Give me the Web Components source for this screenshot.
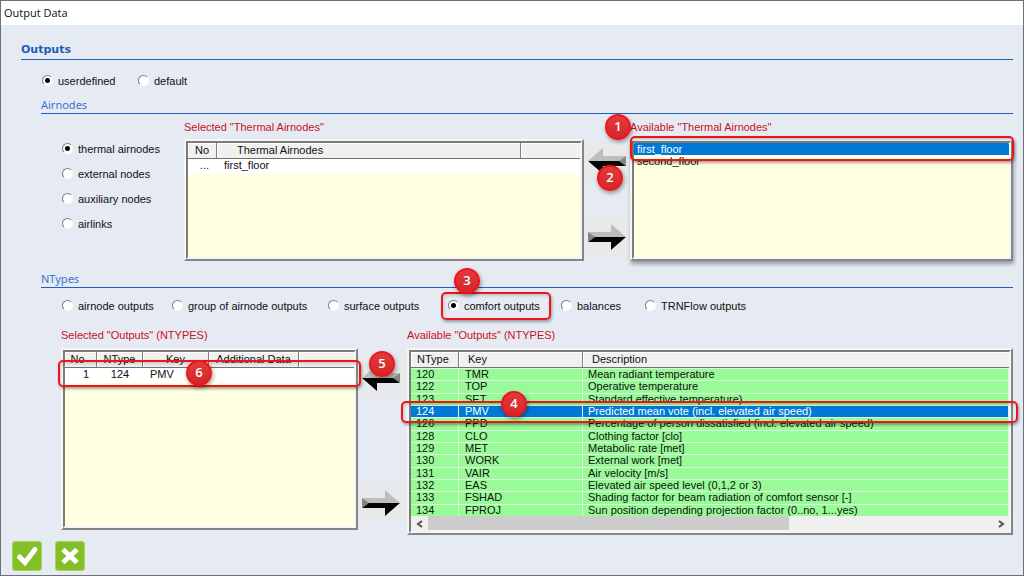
<!DOCTYPE html>
<html lang="en">
<head>
<meta charset="utf-8">
<meta name="viewport" content="width=device-width, initial-scale=1">
<title>Output Data</title>
<style>
  body {
    margin: 0;
    padding: 1px;
    background: #6c7078;
    font: 11px/14px 'Liberation Sans', sans-serif;
    color: #111;
  }

  .section {
    padding-left: 20px;
  }

  .airnodes {
    display: grid;
    grid-template-columns: 143px minmax(0, 400fr) 46px minmax(0, 383fr);
    margin-top: 6px;
    align-items: start;
  }

  .ntypes {
    display: grid;
    grid-template-columns: minmax(0, 297fr) 49px minmax(0, 606fr);
    margin: 15px 0 0 20px;
    align-items: start;
  }

  .airnodes radio-group {
    padding: 21px 0 0 21px;
  }

  .airnodes list-panel {
    --frame-height: 122px;
    --label-gap: 5px;
  }

  .ntypes list-panel {
    --frame-height: 182px;
    --label-gap: 6px;
  }

  .source radio-group {
    padding: 13px 0 9px 21px;
  }

  .ntypes-filter {
    padding: 10px 0 0 21px;
  }

  .airnodes transfer-buttons {
    padding-top: 21px;
    --gap: 36px;
  }

  .ntypes transfer-buttons {
    padding-top: 30px;
    --gap: 85px;
  }
</style>
</head>
<body>
  <output-dialog heading="Output Data">
    <section-heading main>Outputs</section-heading>
    <div class="source">
      <radio-group id="source" label="Source"></radio-group>
    </div>
    <div class="section">
      <section-heading>Airnodes</section-heading>
      <div class="airnodes">
        <radio-group id="nodeKind" label="Airnodes" vertical></radio-group>
        <list-panel label='Selected "Thermal Airnodes"'>
          <data-grid id="selectedNodes"></data-grid>
        </list-panel>
        <transfer-buttons>
          <call-out number="2" style="left: 13px; top: 45px"></call-out>
        </transfer-buttons>
        <list-panel label='Available "Thermal Airnodes"' raised>
          <list-box id="availableNodes" label="Available Thermal Airnodes"></list-box>
          <call-out slot="marks" box style="left: 0; right: -1px; top: -3px; height: 25px"></call-out>
          <call-out slot="marks" number="1" style="left: -25px; top: -25px"></call-out>
        </list-panel>
      </div>
      <section-heading style="margin-top: 10px">NTypes</section-heading>
      <radio-group id="outputKind" class="ntypes-filter" label="NTypes"></radio-group>
      <div class="ntypes">
        <list-panel label='Selected "Outputs" (NTYPES)'>
          <data-grid id="selectedOutputs"></data-grid>
          <call-out slot="marks" box style="left: -3px; right: -3px; top: 12px; height: 27px"></call-out>
          <call-out slot="marks" number="6" style="left: 125px; top: 12px"></call-out>
        </list-panel>
        <transfer-buttons>
          <call-out number="5" style="left: 11px; top: 23px"></call-out>
        </transfer-buttons>
        <list-panel label='Available "Outputs" (NTYPES)'>
          <data-grid id="availableOutputs" dense></data-grid>
          <scroll-strip></scroll-strip>
          <call-out slot="marks" box style="left: -6px; right: -5px; top: 53px; height: 22px"></call-out>
          <call-out slot="marks" number="4" style="left: 94px; top: 43px"></call-out>
        </list-panel>
      </div>
    </div>
    <dialog-actions slot="actions"></dialog-actions>
  </output-dialog>

<script>
class OutputDialog extends HTMLElement {
  constructor() {
    super();
    this.attachShadow({ mode: 'open' });
  }

  connectedCallback() {
    this.shadowRoot.innerHTML = `
      <style>
        :host {
          display: flex;
          flex-direction: column;
          box-sizing: border-box;
          min-height: calc(100vh - 2px);
          background: #e5eaf3;
        }

        header {
          height: 24px;
          box-sizing: border-box;
          padding: 0 3px;
          background: #fff;
          font: 11px/24px 'Open Sans', sans-serif;
        }

        main {
          padding: 16px 10px 0 20px;
        }

        footer {
          padding: 6px 11px 4px;
        }
      </style>
      <header>${this.getAttribute('heading')}</header>
      <main><slot></slot></main>
      <footer><slot name="actions"></slot></footer>
    `;
  }
}

class SectionHeading extends HTMLElement {
  constructor() {
    super();
    this.attachShadow({ mode: 'open' });
  }

  connectedCallback() {
    this.shadowRoot.innerHTML = `
      <style>
        :host {
          display: block;
          border-bottom: 1px solid #1a62b8;
          color: #3a72cc;
        }

        h2 {
          margin: 0;
          font: 11px/16px 'Noto Sans', sans-serif;
        }

        :host([main]) h2 {
          font: bold 11px/18px 'DejaVu Sans', sans-serif;
          color: #1a5fba;
        }
      </style>
      <h2><slot></slot></h2>
    `;
  }
}

class RadioGroup extends HTMLElement {
  constructor() {
    super();
    this.attachShadow({ mode: 'open' });
  }

  set options(options) {
    this._options = options;
    this.render();
  }

  render() {
    const items = this._options.map((option) => `
      <label>
        <input type="radio" name="choice" ${option.checked ? 'checked' : ''}>
        <span>${option.text}</span>
        ${option.number ? `
          <call-out box style="inset: -6px -11px -7px -7px"></call-out>
          <call-out number="${option.number}" style="left: 6px; top: -30px"></call-out>
        ` : ''}
      </label>
    `).join('');

    this.shadowRoot.innerHTML = `
      <style>
        :host {
          display: block;
        }

        .group {
          display: grid;
          grid-template-columns: var(--columns, 96px auto);
          justify-content: start;
        }

        :host([vertical]) .group {
          grid-template-columns: auto;
          row-gap: 10px;
        }

        label {
          position: relative;
          display: flex;
          justify-self: start;
          align-items: center;
          gap: 5px;
          height: 15px;
          white-space: nowrap;
        }

        input {
          appearance: none;
          flex: none;
          width: 11px;
          height: 11px;
          margin: 0;
          border: 1px solid;
          border-color: #7e7e7e #fafafa #fafafa #7e7e7e;
          border-radius: 50%;
          background: #fff;
        }

        input:checked {
          background: radial-gradient(circle, #000 2px, #fff 3px);
        }
      </style>
      <div class="group" role="radiogroup" aria-label="${this.getAttribute('label')}">${items}</div>
    `;
  }
}

class ListPanel extends HTMLElement {
  constructor() {
    super();
    this.attachShadow({ mode: 'open' });
  }

  connectedCallback() {
    this.shadowRoot.innerHTML = `
      <style>
        :host {
          display: block;
        }

        .label {
          height: 14px;
          margin-bottom: var(--label-gap);
          color: #cc1020;
          white-space: nowrap;
        }

        .frame {
          position: relative;
          box-sizing: border-box;
          min-height: var(--frame-height);
          display: flex;
          border: 2px solid;
          border-color: #f6f6f6 #858585 #858585 #f6f6f6;
        }

        :host([raised]) .frame {
          box-shadow: 1px 3px 4px rgba(0, 0, 0, 0.35);
        }

        .content {
          flex: 1;
          min-width: 0;
          display: flex;
          flex-direction: column;
          border: 2px solid;
          border-color: #7c7c7c #f6f6f6 #f6f6f6 #7c7c7c;
          background: #ffffe1;
        }

        .marks {
          position: absolute;
          inset: -2px;
          pointer-events: none;
        }
      </style>
      <div class="label">${this.getAttribute('label')}</div>
      <div class="frame">
        <div class="content"><slot></slot></div>
        <div class="marks"><slot name="marks"></slot></div>
      </div>
    `;
  }
}

class DataGrid extends HTMLElement {
  constructor() {
    super();
    this.attachShadow({ mode: 'open' });
  }

  set data(data) {
    this._data = data;
    this.render();
  }

  render() {
    const { columns, rows, selected } = this._data;
    const cols = columns.map((c) => `<col${c.width ? ` style="width: ${c.width}px"` : ''}>`).join('');
    const head = columns.map((c) => `<th style="${c.head || ''}">${c.title}</th>`).join('');
    const body = rows.map((row) => `
      <tr class="${row[0] === selected ? 'selected' : ''}">
        ${row.map((cell, i) => `<td style="${columns[i].cell || ''}">${cell}</td>`).join('')}
      </tr>
    `).join('');

    this.shadowRoot.innerHTML = `
      <style>
        :host {
          display: block;
        }

        table {
          width: 100%;
          table-layout: fixed;
          border-collapse: separate;
          border-spacing: 0;
        }

        th,
        td {
          padding: 0;
          white-space: nowrap;
        }

        th {
          height: 15px;
          line-height: 15px;
          font-weight: normal;
          background: #f0f0f0;
          border-right: 1px solid #808080;
          border-bottom: 1px solid #707070;
          box-shadow: inset 1px 1px #fff;
        }

        th:last-child {
          border-right: 0;
        }

        td {
          height: 15px;
          line-height: 13px;
          vertical-align: top;
          background: #fff;
        }

        /* dense: green list whose rows share the height above the scroll bar */
        :host([dense]) {
          height: 164px;
        }

        :host([dense]) table {
          height: 164px;
        }

        :host([dense]) td {
          height: auto;
          line-height: 11px;
          background: #98fb98;
          border-right: 1px solid #dff5df;
          border-top: 1px solid #dff5df;
        }

        :host([dense]) .selected td {
          background: #0078d7;
          color: #fff;
        }
      </style>
      <table>
        <colgroup>${cols}</colgroup>
        <thead><tr>${head}</tr></thead>
        <tbody>${body}</tbody>
      </table>
    `;
  }
}

class ListBox extends HTMLElement {
  constructor() {
    super();
    this.attachShadow({ mode: 'open' });
  }

  set items(items) {
    this.shadowRoot.innerHTML = `
      <style>
        :host {
          display: flex;
          flex: 1;
        }

        select {
          flex: 1;
          min-width: 0;
          padding: 0;
          border: 0;
          outline: 0;
          overflow: hidden;
          background: #ffffe1;
          color: inherit;
          font: inherit;
        }

        option {
          height: 12px;
          min-height: 0;
          padding: 0 3px;
          line-height: 12px;
        }

        option:checked {
          background: #0078d7 linear-gradient(#0078d7, #0078d7);
          color: #fff;
        }
      </style>
      <select size="8" aria-label="${this.getAttribute('label')}">
        ${items.map((item, i) => `<option ${i === 0 ? 'selected' : ''}>${item}</option>`).join('')}
      </select>
    `;
  }
}

class TransferButtons extends HTMLElement {
  constructor() {
    super();
    this.attachShadow({ mode: 'open' });
  }

  connectedCallback() {
    this.shadowRoot.innerHTML = `
      <style>
        :host {
          position: relative;
          display: flex;
          flex-direction: column;
          gap: var(--gap);
        }

        button {
          height: 40px;
          padding: 0 3px;
          border: 0;
          background: #e8e9eb;
        }

        svg {
          display: block;
        }
      </style>
      <button type="button" aria-label="Add">
        <svg width="40" height="26" viewBox="0 0 40 26">
          <path d="M1 13 16 0V8H39L33 13Z" fill="#bdbdbd"/>
          <path d="M1 13H33L39 18H16V26Z" fill="#050505"/>
          <path d="M39 8V18L32 13Z" fill="#858585"/>
        </svg>
      </button>
      <button type="button" aria-label="Remove">
        <svg width="40" height="26" viewBox="0 0 40 26">
          <path d="M39 13 24 0V8H1L7 13Z" fill="#bdbdbd"/>
          <path d="M39 13H7L1 18H24V26Z" fill="#050505"/>
          <path d="M1 8V18L8 13Z" fill="#858585"/>
        </svg>
      </button>
      <slot></slot>
    `;
  }
}

class ScrollStrip extends HTMLElement {
  constructor() {
    super();
    this.attachShadow({ mode: 'open' });
  }

  connectedCallback() {
    this.shadowRoot.innerHTML = `
      <style>
        :host {
          display: flex;
          height: 15px;
          background: #f0f0f0;
        }

        button {
          width: 17px;
          padding: 0;
          border: 0;
          background: none;
        }

        svg {
          display: block;
          margin: auto;
          fill: none;
          stroke: #505050;
          stroke-width: 2;
        }

        .track {
          flex: 1;
        }

        .thumb {
          width: 64%;
          height: 14px;
          background: #cdcdcd;
        }
      </style>
      <button type="button" aria-label="Scroll left">
        <svg width="8" height="8" viewBox="0 0 8 8"><path d="M6 1 2 4 6 7"/></svg>
      </button>
      <div class="track"><div class="thumb"></div></div>
      <button type="button" aria-label="Scroll right">
        <svg width="8" height="8" viewBox="0 0 8 8"><path d="M2 1 6 4 2 7"/></svg>
      </button>
    `;
  }
}

class CallOut extends HTMLElement {
  constructor() {
    super();
    this.attachShadow({ mode: 'open' });
  }

  connectedCallback() {
    this.shadowRoot.innerHTML = `
      <style>
        :host {
          position: absolute;
          box-sizing: border-box;
          z-index: 2;
          pointer-events: none;
          border: 2px solid #f0141a;
          box-shadow: 1px 2px 4px rgba(0, 0, 0, 0.4);
        }

        :host([box]) {
          z-index: 1;
          border-radius: 5px;
          box-shadow: 1px 2px 3px rgba(0, 0, 0, 0.35), inset 1px 2px 3px rgba(0, 0, 0, 0.15);
        }

        :host([number]) {
          width: 26px;
          height: 26px;
          border-radius: 50%;
          background: linear-gradient(#e23a3c, #d2282c);
          color: #fff;
          font: 600 13px/21px 'Open Sans', sans-serif;
          text-align: center;
        }
      </style>
      ${this.getAttribute('number') || ''}
    `;
  }
}

class DialogActions extends HTMLElement {
  constructor() {
    super();
    this.attachShadow({ mode: 'open' });
  }

  connectedCallback() {
    this.shadowRoot.innerHTML = `
      <style>
        :host {
          display: flex;
          gap: 13px;
        }

        button {
          width: 30px;
          height: 30px;
          padding: 0;
          border: 1px solid #a4d65c;
          border-radius: 3px;
          background: #84bf26;
        }

        svg {
          display: block;
          fill: none;
          stroke: #fff;
        }
      </style>
      <button type="button" aria-label="OK">
        <svg width="28" height="28" viewBox="0 0 28 28">
          <path d="M6.500 15 12 20.500 22 7.500" stroke-width="5" stroke-linecap="round" stroke-linejoin="miter"/>
        </svg>
      </button>
      <button type="button" aria-label="Cancel">
        <svg width="28" height="28" viewBox="0 0 28 28">
          <path d="M7 7.500 21 20.500M21 7.500 7 20.500" stroke-width="5"/>
        </svg>
      </button>
    `;
  }
}

customElements.define('call-out', CallOut);
customElements.define('output-dialog', OutputDialog);
customElements.define('section-heading', SectionHeading);
customElements.define('radio-group', RadioGroup);
customElements.define('list-panel', ListPanel);
customElements.define('data-grid', DataGrid);
customElements.define('list-box', ListBox);
customElements.define('transfer-buttons', TransferButtons);
customElements.define('scroll-strip', ScrollStrip);
customElements.define('dialog-actions', DialogActions);

const find = (id) => document.getElementById(id);

find('source').options = [
  { text: 'userdefined', checked: true },
  { text: 'default' },
];

find('nodeKind').options = [
  { text: 'thermal airnodes', checked: true },
  { text: 'external nodes' },
  { text: 'auxiliary nodes' },
  { text: 'airlinks' },
];

find('outputKind').style.setProperty('--columns', '110px 156px 120px 113px 84px auto');
find('outputKind').options = [
  { text: 'airnode outputs' },
  { text: 'group of airnode outputs' },
  { text: 'surface outputs' },
  { text: 'comfort outputs', checked: true, number: 3 },
  { text: 'balances' },
  { text: 'TRNFlow outputs' },
];

find('selectedNodes').data = {
  columns: [
    { title: 'No', width: 29, cell: 'text-align: right; padding-right: 8px' },
    { title: 'Thermal Airnodes', width: 304, head: 'text-align: left; padding-left: 20px', cell: 'padding-left: 7px' },
    { title: '' },
  ],
  rows: [['...', 'first_floor', '']],
};

find('availableNodes').items = ['first_floor', 'second_floor'];

find('selectedOutputs').data = {
  columns: [
    { title: 'No', width: 32, head: 'padding-right: 6px', cell: 'text-align: right; padding-right: 8px' },
    { title: 'NType', width: 46, cell: 'text-align: center' },
    { title: 'Key', width: 66, cell: 'padding-left: 7px' },
    { title: 'Additional Data', width: 90 },
    { title: '' },
  ],
  rows: [['1', '124', 'PMV', '', '']],
};

find('availableOutputs').data = {
  selected: '124',
  columns: [
    { title: 'NType', width: 48, head: 'text-align: left; padding-left: 6px', cell: 'padding-left: 5px' },
    { title: 'Key', width: 124, head: 'text-align: left; padding-left: 9px', cell: 'padding-left: 6px' },
    { title: 'Description', head: 'text-align: left; padding-left: 9px', cell: 'padding-left: 5px' },
  ],
  rows: [
    ['120', 'TMR', 'Mean radiant temperature'],
    ['122', 'TOP', 'Operative temperature'],
    ['123', 'SET', 'Standard effective temperature)'],
    ['124', 'PMV', 'Predicted mean vote (incl. elevated air speed)'],
    ['126', 'PPD', 'Percentage of person dissatisfied (incl. elevated air speed)'],
    ['128', 'CLO', 'Clothing factor [clo]'],
    ['129', 'MET', 'Metabolic rate [met]'],
    ['130', 'WORK', 'External work [met]'],
    ['131', 'VAIR', 'Air velocity [m/s]'],
    ['132', 'EAS', 'Elevated air speed level (0,1,2 or 3)'],
    ['133', 'FSHAD', 'Shading factor for beam radiation of comfort sensor [-]'],
    ['134', 'FPROJ', 'Sun position depending projection factor (0..no, 1...yes)'],
  ],
};
</script>
</body>
</html>
